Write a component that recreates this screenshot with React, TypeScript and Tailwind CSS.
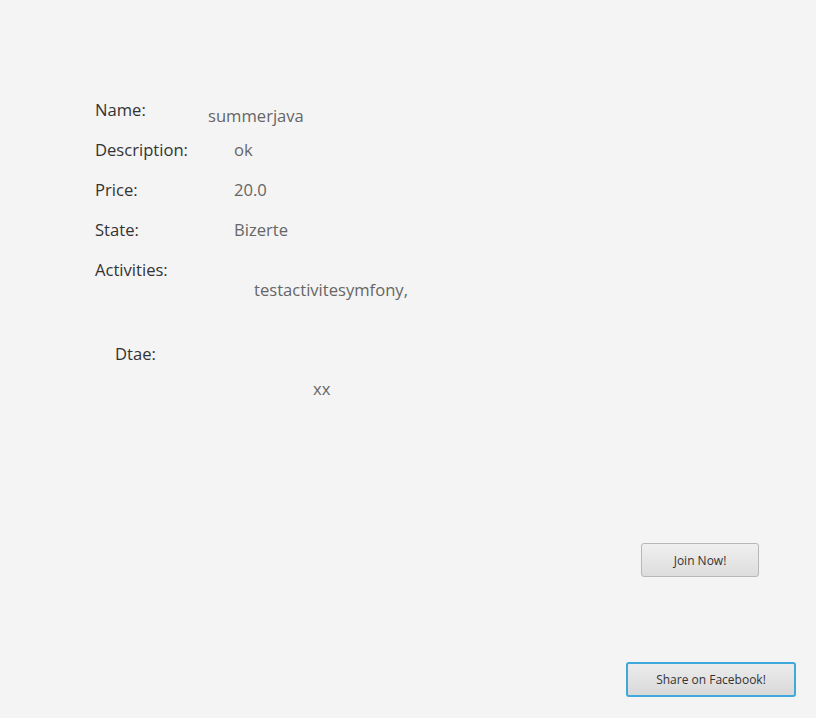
const rows = [
  { label: "Name:", value: "summerjava", labelWidth: "w-[113px]", valueTop: "mt-[6px]" },
  { label: "Description:", value: "ok", labelWidth: "w-[139px]", valueTop: "" },
  { label: "Price:", value: "20.0", labelWidth: "w-[139px]", valueTop: "" },
  { label: "State:", value: "Bizerte", labelWidth: "w-[139px]", valueTop: "" },
];

export default function App() {
  return (
    <main className="h-[718px] w-[816px] overflow-hidden bg-[#f4f4f4] font-['Open_Sans','Noto_Sans',sans-serif] text-[16.6px] leading-[20px]">
      <div className="flex flex-col pl-[95px] pt-[100px]">
        {rows.map((row) => (
          <div key={row.label} className="flex h-[40px] items-start">
            <span className={`shrink-0 text-[#333333] ${row.labelWidth}`}>{row.label}</span>
            <span className={`text-[#666666] ${row.valueTop}`}>{row.value}</span>
          </div>
        ))}
        <div className="text-[#333333]">Activities:</div>
        <div className="ml-[159px] text-[#666666]">testactivitesymfony,</div>
        <div className="ml-[20px] mt-[44px] text-[#333333]">Dtae:</div>
        <div className="ml-[218px] mt-[15px] text-[#666666]">xx</div>
      </div>

      <div className="flex flex-col items-start">
        <button className="ml-[641px] mt-[144px] h-[34px] w-[118px] rounded-[3px] border border-[#b8b8b8] bg-gradient-to-b from-[#f0f0f0] to-[#dddddd] pt-[2px] text-[12px] text-[#333333]">
          Join Now!
        </button>
        <button className="ml-[626px] mt-[85px] h-[35px] w-[170px] rounded-[3px] border-2 border-[#3fa9dc] bg-gradient-to-b from-[#ececec] to-[#d9d9d9] pt-[1px] text-[12px] text-[#333333]">
          Share on Facebook!
        </button>
      </div>
    </main>
  );
}
